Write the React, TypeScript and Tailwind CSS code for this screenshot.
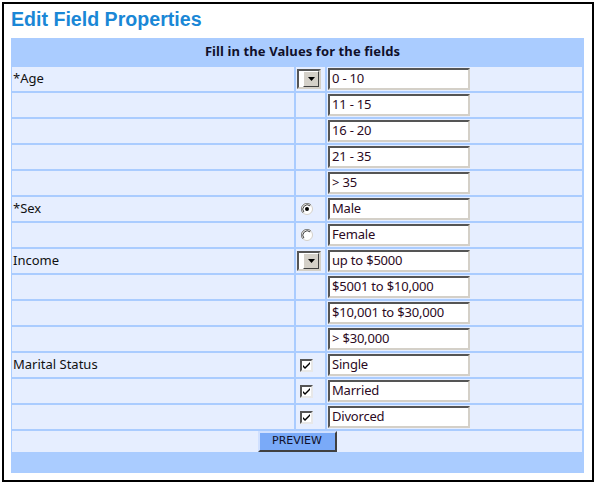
import type { ReactNode } from 'react';

type Ctl = 'select' | 'radio-on' | 'radio-off' | 'check' | null;

const rows: { label: string; ctl: Ctl; value: string }[] = [
  { label: '*Age', ctl: 'select', value: '0 - 10' },
  { label: '', ctl: null, value: '11 - 15' },
  { label: '', ctl: null, value: '16 - 20' },
  { label: '', ctl: null, value: '21 - 35' },
  { label: '', ctl: null, value: '> 35' },
  { label: '*Sex', ctl: 'radio-on', value: 'Male' },
  { label: '', ctl: 'radio-off', value: 'Female' },
  { label: 'Income', ctl: 'select', value: 'up to $5000' },
  { label: '', ctl: null, value: '$5001 to $10,000' },
  { label: '', ctl: null, value: '$10,001 to $30,000' },
  { label: '', ctl: null, value: '> $30,000' },
  { label: 'Marital Status', ctl: 'check', value: 'Single' },
  { label: '', ctl: 'check', value: 'Married' },
  { label: '', ctl: 'check', value: 'Divorced' },
];

const tahoma = "font-['Noto_Sans',Tahoma,sans-serif]";

function SelectStub() {
  return (
    <div className="ml-[1px] flex h-[20px] w-[24px] border-2 border-t-[#555] border-l-[#555] border-r-[#d4d0c8] border-b-[#d4d0c8] bg-white">
      <div className="flex-1" />
      <div className="flex h-full w-[16px] items-center justify-center border border-t-white border-l-white border-r-[#404040] border-b-[#404040] bg-[#d4d0c8]">
        <svg width="7" height="4" viewBox="0 0 7 4">
          <path d="M0 0H7L3.5 4Z" fill="#000" />
        </svg>
      </div>
    </div>
  );
}

function Radio({ on }: { on: boolean }) {
  return (
    <svg width="12" height="12" viewBox="0 0 12 12" className="ml-[5px]">
      <circle cx="6" cy="6" r="5.5" fill="#fff" stroke="#d4d0c8" />
      <path d="M10 2A5.5 5.5 0 0 0 2 10" stroke="#808080" fill="none" />
      <path d="M9.1 2.9A4.4 4.4 0 0 0 2.9 9.1" stroke="#404040" fill="none" />
      {on && <circle cx="6" cy="6" r="2" fill="#000" />}
    </svg>
  );
}

function Check() {
  return (
    <div className="ml-[4px] flex h-[13px] w-[13px] items-center justify-center border-2 border-t-[#555] border-l-[#555] border-r-[#e8e8e8] border-b-[#e8e8e8] bg-white">
      <svg width="7" height="7" viewBox="0 0 7 7">
        <path d="M0 3L0 5L2 7L7 2L7 0L2 5Z" fill="#000" />
      </svg>
    </div>
  );
}

function Cell({ children, className = '' }: { children?: ReactNode; className?: string }) {
  return <div className={`flex h-full items-center bg-[#e6eeff] ${className}`}>{children}</div>;
}

export default function App() {
  return (
    <div className="h-[484px] w-[597px] bg-white">
      <div className="ml-[2px] mt-[2px] h-[480px] w-[592px] border-2 border-black bg-white pl-[7px] pt-[3px]">
        <h1 className="mb-[7px] font-['Liberation_Sans',Arial,sans-serif] text-[19.6px] font-bold leading-[24px] text-[#1a87d6]">
          Edit Field Properties
        </h1>

        <div className={`w-[573px] bg-[#aaccff] pl-[1px] pr-[2px] pb-[21px] ${tahoma}`}>
          {/* header sits a touch right of centre in the original */}
          <div className="flex h-[29px] items-center justify-center pb-[1px] pl-[11px] text-[13px] font-bold tracking-[0.1px] text-[#10102a]">
            Fill in the Values for the fields
          </div>

          <div className="flex flex-col gap-[2px]">
            {rows.map((r, i) => (
              <div key={i} className="flex h-[24px] gap-[2px]">
                <Cell className="w-[282px] pl-[1px] text-[13px] text-[#111]">{r.label}</Cell>
                <Cell className="w-[29px]">
                  {r.ctl === 'select' && <SelectStub />}
                  {r.ctl === 'radio-on' && <Radio on />}
                  {r.ctl === 'radio-off' && <Radio on={false} />}
                  {r.ctl === 'check' && <Check />}
                </Cell>
                <Cell className="flex-1">
                  <div className="ml-[1px] flex h-[22px] w-[142px] items-center border-2 border-t-[#555] border-l-[#555] border-r-[#d4d0c8] border-b-[#d4d0c8] bg-white pl-[2px] text-[13px] tracking-[-0.2px] text-[#2b0a1e]">
                    {r.value}
                  </div>
                </Cell>
              </div>
            ))}

            <div className="flex h-[21px] items-start justify-center bg-[#e6eeff]">
              <button className="flex h-[21px] w-[79px] items-center justify-center border-2 border-t-[#d0e0ff] border-l-[#d0e0ff] border-r-[#404040] border-b-[#404040] bg-[#7aaaf8] font-['DejaVu_Sans',Verdana,sans-serif] text-[11px] text-[#10102a]">
                PREVIEW
              </button>
            </div>
          </div>
        </div>
      </div>
    </div>
  );
}
